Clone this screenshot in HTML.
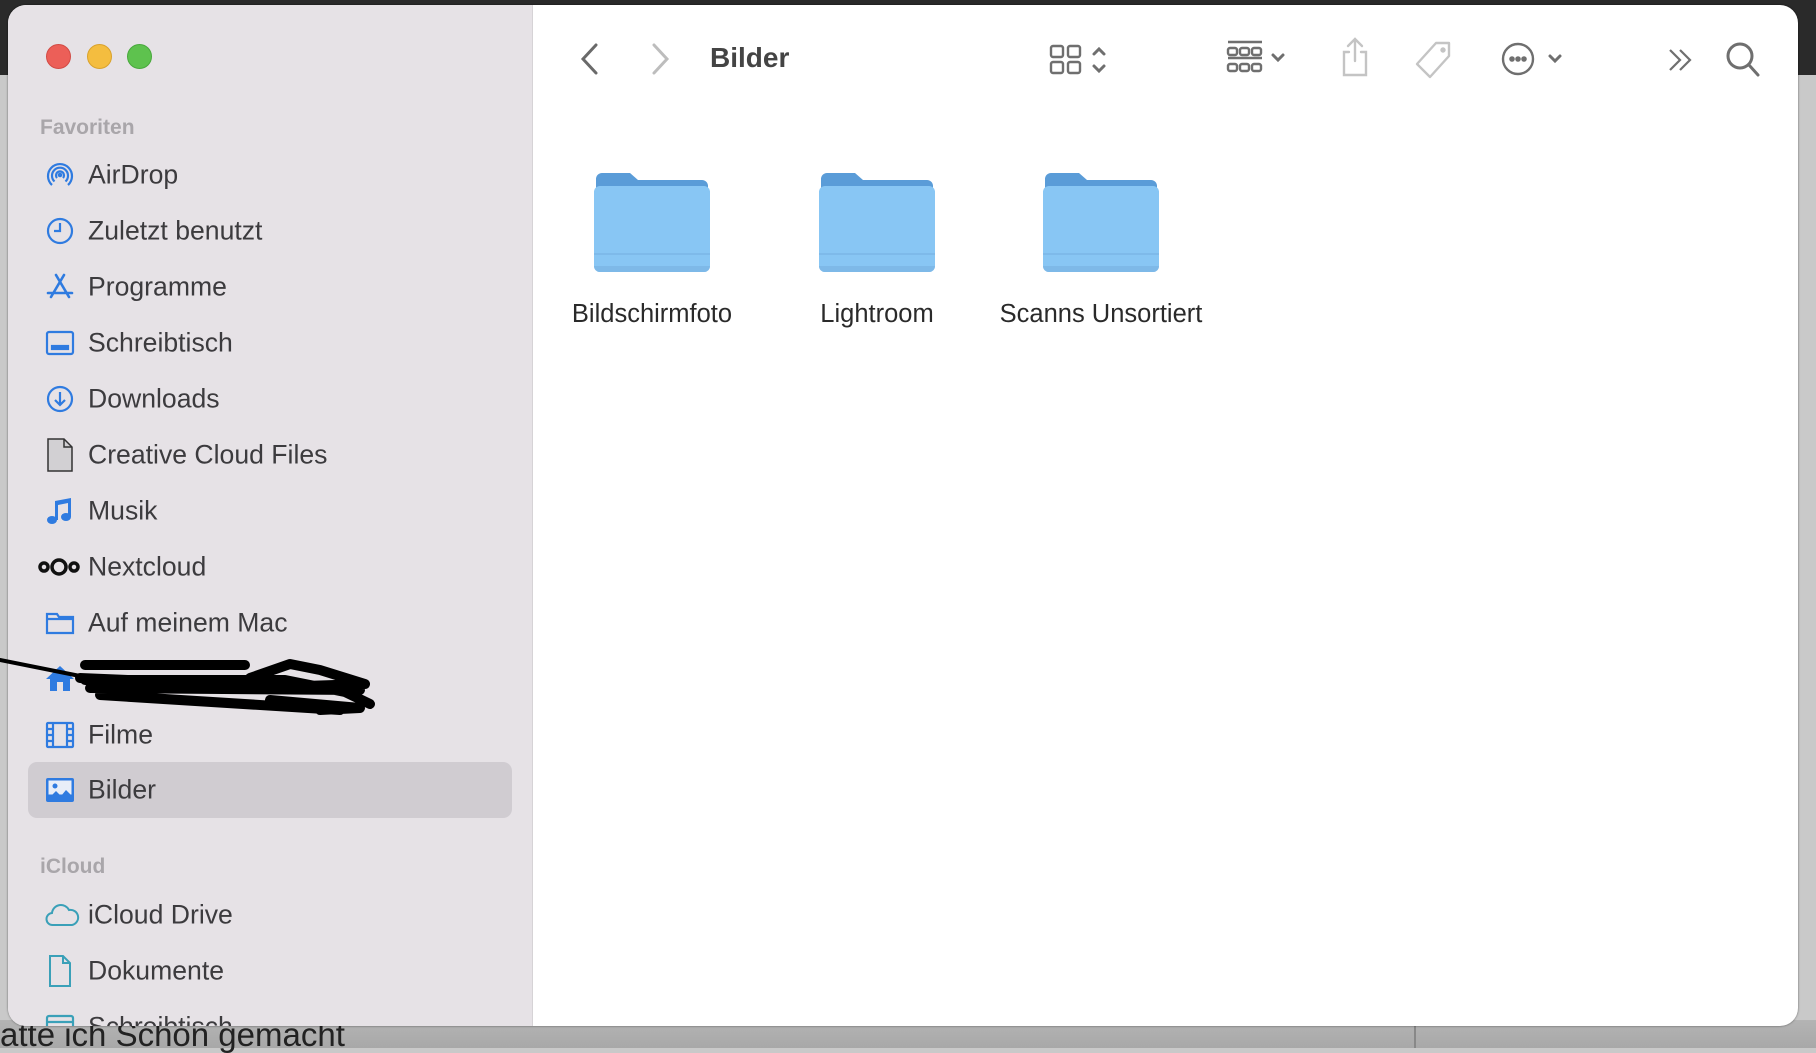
<!DOCTYPE html>
<html><head><meta charset="utf-8"><style>
*{margin:0;padding:0;box-sizing:border-box}
html,body{width:1816px;height:1048px;overflow:hidden;background:#c9c9c9;font-family:"Liberation Sans",sans-serif}
.topbar{position:absolute;left:0;top:0;width:1816px;height:75px;background:#2a2a2a}
.bottom{position:absolute;left:0;top:1020px;width:1816px;height:28px;background:linear-gradient(#b4b4b4,#a8a8a8)}
.bottom span{position:absolute;left:0;top:-2px;font-size:33px;color:#222;line-height:33px}
.vline{position:absolute;left:1414px;top:1026px;width:2px;height:22px;background:#888}
.win{position:absolute;left:8px;top:5px;width:1790px;height:1021px;border-radius:18px;overflow:hidden;background:#fff;box-shadow:0 0 2px rgba(0,0,0,.5)}
.side{position:absolute;left:0;top:0;width:525px;height:100%;background:#e6e2e6;border-right:1px solid #d6d3d6}
.tl{position:absolute;top:39px;width:25px;height:25px;border-radius:50%}
.hdr{position:absolute;left:32px;font-size:21px;font-weight:bold;color:#a9a6aa}
.item{position:absolute;left:0;width:525px;height:56px}
.item .t{position:absolute;left:80px;top:50%;transform:translateY(-50%);font-size:26.6px;color:#3c3b3e;white-space:nowrap}
.item svg{position:absolute;left:36px;top:50%;transform:translateY(-50%)}
.sel{position:absolute;left:20px;top:757px;width:484px;height:56px;background:#d0ccd1;border-radius:9px}
.tb{position:absolute;top:0;left:525px;right:0;height:110px}
.title{position:absolute;left:177px;top:37px;font-size:28px;font-weight:bold;color:#444}
.tb svg{position:absolute}
.folder{position:absolute;top:166px;width:120px;height:105px}
.lbl{position:absolute;top:295px;font-size:25.5px;color:#2a2a2a;text-align:center;width:260px}
</style></head><body>
<div class="topbar"></div>
<div class="bottom"><span>atte ich Schon gemacht</span></div>
<div class="vline"></div>
<div class="win">
 <div class="side">
  <div class="tl" style="left:38px;background:#ec5f58;border:1px solid #d24b45"></div>
  <div class="tl" style="left:79px;background:#f4bd3f;border:1px solid #d9a22c"></div>
  <div class="tl" style="left:119px;background:#5ec24e;border:1px solid #48a83c"></div>
  <div class="hdr" style="top:111px">Favoriten</div>
  <div class="sel"></div>
  <div class="item" style="top:142px"><svg width="32" height="32" viewBox="0 0 32 32" fill="none" stroke="#2f7be0" stroke-width="2.2"><path d="M8 26A12 12 0 1 1 24 26"/><path d="M10.5 22.5A8 8 0 1 1 21.5 22.5"/><path d="M13 19A4 4 0 1 1 19 19"/><circle cx="16" cy="16" r="1.2" fill="#2f7be0"/></svg><span class="t">AirDrop</span></div>
  <div class="item" style="top:198px"><svg width="32" height="32" viewBox="0 0 32 32" fill="none" stroke="#2f7be0" stroke-width="2.2"><circle cx="16" cy="16" r="12"/><path d="M16 8v8h-6"/></svg><span class="t">Zuletzt benutzt</span></div>
  <div class="item" style="top:254px"><svg width="32" height="32" viewBox="0 0 32 32" fill="none" stroke="#2f7be0" stroke-width="2.6" stroke-linecap="round"><path d="M12 4l13 22M20 4L7 26M4 22h24"/></svg><span class="t">Programme</span></div>
  <div class="item" style="top:310px"><svg width="32" height="32" viewBox="0 0 32 32" fill="none" stroke="#2f7be0" stroke-width="2.2"><rect x="3" y="5" width="26" height="22" rx="2"/><rect x="8" y="19" width="16" height="3" fill="#2f7be0"/></svg><span class="t">Schreibtisch</span></div>
  <div class="item" style="top:366px"><svg width="32" height="32" viewBox="0 0 32 32" fill="none" stroke="#2f7be0" stroke-width="2.2"><circle cx="16" cy="16" r="12"/><path d="M16 9v13M11 17l5 5 5-5"/></svg><span class="t">Downloads</span></div>
  <div class="item" style="top:422px"><svg width="32" height="36" viewBox="0 0 32 36" stroke="#333" stroke-width="1.5"><path d="M4 2h16l8 8v24H4z" fill="#d2d0d3"/><path d="M20 2v8h8" fill="none"/></svg><span class="t">Creative Cloud Files</span></div>
  <div class="item" style="top:478px"><svg width="32" height="32" viewBox="0 0 32 32" fill="#2f7be0"><path d="M11 6l16-3v19h-3V8l-10 2v15h-3z"/><ellipse cx="8" cy="25" rx="5" ry="4"/><ellipse cx="22" cy="22" rx="5" ry="4"/></svg><span class="t">Musik</span></div>
  <div class="item" style="top:534px"><svg width="42" height="24" viewBox="0 0 42 24" fill="none" stroke="#111" stroke-width="3.5" style="left:30px"><circle cx="6" cy="12" r="4"/><circle cx="21" cy="12" r="7"/><circle cx="36" cy="12" r="4"/></svg><span class="t">Nextcloud</span></div>
  <div class="item" style="top:590px"><svg width="32" height="32" viewBox="0 0 32 32" fill="none" stroke="#2f7be0" stroke-width="2.2"><path d="M3 7h10l2 3h14v16H3z"/><path d="M3 12h26"/></svg><span class="t">Auf meinem Mac</span></div>
  <div class="item" style="top:646px"><svg width="32" height="32" viewBox="0 0 32 32" fill="#2f7be0"><path d="M16 3L2 16h4v12h20V16h4z"/><rect x="13" y="19" width="6" height="9" fill="#e6e2e6"/></svg></div>
  <div class="item" style="top:702px"><svg width="32" height="32" viewBox="0 0 32 32" fill="none" stroke="#2f7be0" stroke-width="2.2"><rect x="3" y="4" width="26" height="24" rx="1"/><path d="M9 4v24M23 4v24M3 10h6M3 16h6M3 22h6M23 10h6M23 16h6M23 22h6"/></svg><span class="t">Filme</span></div>
  <div class="item" style="top:757px"><svg width="32" height="32" viewBox="0 0 32 32"><rect x="2" y="4" width="28" height="24" rx="2" fill="#2f7be0"/><rect x="4.5" y="6.5" width="23" height="14" fill="#e8eef8"/><circle cx="11" cy="12" r="2.5" fill="#2f7be0"/><path d="M3 26l9-9 5 5 5-6 8 8v2H3z" fill="#2f7be0"/></svg><span class="t">Bilder</span></div>
  <div class="hdr" style="top:850px">iCloud</div>
  <div class="item" style="top:882px"><svg width="36" height="28" viewBox="0 0 36 28" fill="none" stroke="#3aa0b8" stroke-width="2"><path d="M9 24a6 6 0 0 1-1-12 9 9 0 0 1 17-3 7 7 0 0 1 3 15z"/></svg><span class="t">iCloud Drive</span></div>
  <div class="item" style="top:938px"><svg width="32" height="34" viewBox="0 0 32 34" fill="none" stroke="#3aa0b8" stroke-width="2"><path d="M6 2h13l7 7v23H6z"/><path d="M19 2v7h7"/></svg><span class="t">Dokumente</span></div>
  <div class="item" style="top:994px"><svg width="32" height="32" viewBox="0 0 32 32" fill="none" stroke="#3aa0b8" stroke-width="2.2"><rect x="3" y="5" width="26" height="22" rx="2"/><path d="M3 11h26"/></svg><span class="t">Schreibtisch</span></div>
 </div>
 <div class="tb">
  <svg style="left:45px;top:36px" width="24" height="36" viewBox="0 0 24 36" fill="none" stroke="#6a6a6a" stroke-width="3" stroke-linecap="round"><path d="M18 4L5 18l13 14"/></svg>
  <svg style="left:115px;top:36px" width="24" height="36" viewBox="0 0 24 36" fill="none" stroke="#bdbdbd" stroke-width="3" stroke-linecap="round"><path d="M6 4l13 14L6 32"/></svg>
  <div class="title">Bilder</div>
  <svg style="left:516px;top:37px" width="64" height="36" viewBox="0 0 64 36" fill="none" stroke="#6f6f6f" stroke-width="2.4"><rect x="2" y="4" width="12" height="11" rx="2"/><rect x="19" y="4" width="12" height="11" rx="2"/><rect x="2" y="20" width="12" height="11" rx="2"/><rect x="19" y="20" width="12" height="11" rx="2"/><path d="M45 12l5-5 5 5M45 24l5 5 5-5" stroke-width="3" stroke-linecap="round"/></svg>
  <svg style="left:693px;top:33px" width="72" height="40" viewBox="0 0 72 40" fill="none" stroke="#6f6f6f" stroke-width="2.4"><path d="M2 4h34M2 20h34"/><rect x="2" y="10" width="9" height="7" rx="2"/><rect x="14" y="10" width="9" height="7" rx="2"/><rect x="26" y="10" width="9" height="7" rx="2"/><rect x="2" y="26" width="9" height="7" rx="2"/><rect x="14" y="26" width="9" height="7" rx="2"/><rect x="26" y="26" width="9" height="7" rx="2"/><path d="M47 17l5 5 5-5" stroke-width="3" stroke-linecap="round"/></svg>
  <svg style="left:805px;top:31px" width="34" height="42" viewBox="0 0 34 42" fill="none" stroke="#c4c4c4" stroke-width="2.4" stroke-linecap="round"><path d="M17 3v22M10 10l7-7 7 7M11 16H6v23h22V16h-5"/></svg>
  <svg style="left:881px;top:35px" width="40" height="40" viewBox="0 0 40 40" fill="none" stroke="#c4c4c4" stroke-width="2.4"><path d="M22 3h13v13L16 37 3 24z" stroke-linejoin="round"/><circle cx="29" cy="10" r="1.5" fill="#c4c4c4"/></svg>
  <svg style="left:968px;top:37px" width="72" height="36" viewBox="0 0 72 36" fill="none" stroke="#6f6f6f" stroke-width="2.4"><circle cx="17" cy="17" r="15"/><circle cx="11" cy="17" r="1.6" fill="#6f6f6f"/><circle cx="17" cy="17" r="1.6" fill="#6f6f6f"/><circle cx="23" cy="17" r="1.6" fill="#6f6f6f"/><path d="M49 14l5 5 5-5" stroke-width="3" stroke-linecap="round"/></svg>
  <svg style="left:1133px;top:41px" width="30" height="28" viewBox="0 0 30 28" fill="none" stroke="#6f6f6f" stroke-width="2.2"><path d="M4 4l10 10L4 24M14 4l10 10-10 10"/></svg>
  <svg style="left:1191px;top:35px" width="40" height="40" viewBox="0 0 40 40" fill="none" stroke="#6f6f6f" stroke-width="3" stroke-linecap="round"><circle cx="16" cy="16" r="12"/><path d="M25 25l9 10"/></svg>
 </div>
 <svg class="folder" style="left:584px;top:164px" viewBox="0 0 120 105"><path d="M4 10a6 6 0 0 1 6-6h28l8 7h64a6 6 0 0 1 6 6v76H4z" fill="#5a9cd8"/><rect x="2" y="17" width="116" height="86" rx="6" fill="#88c6f4"/><path d="M2 85h116" stroke="#7bb6e6" stroke-width="1.5"/><path d="M2 97a6 6 0 0 0 6 6h104a6 6 0 0 0 6-6" fill="#7eb9e8"/></svg>
 <svg class="folder" style="left:809px;top:164px" viewBox="0 0 120 105"><path d="M4 10a6 6 0 0 1 6-6h28l8 7h64a6 6 0 0 1 6 6v76H4z" fill="#5a9cd8"/><rect x="2" y="17" width="116" height="86" rx="6" fill="#88c6f4"/><path d="M2 85h116" stroke="#7bb6e6" stroke-width="1.5"/><path d="M2 97a6 6 0 0 0 6 6h104a6 6 0 0 0 6-6" fill="#7eb9e8"/></svg>
 <svg class="folder" style="left:1033px;top:164px" viewBox="0 0 120 105"><path d="M4 10a6 6 0 0 1 6-6h28l8 7h64a6 6 0 0 1 6 6v76H4z" fill="#5a9cd8"/><rect x="2" y="17" width="116" height="86" rx="6" fill="#88c6f4"/><path d="M2 85h116" stroke="#7bb6e6" stroke-width="1.5"/><path d="M2 97a6 6 0 0 0 6 6h104a6 6 0 0 0 6-6" fill="#7eb9e8"/></svg>
 <div class="lbl" style="left:514px">Bildschirmfoto</div>
 <div class="lbl" style="left:739px">Lightroom</div>
 <div class="lbl" style="left:963px">Scanns Unsortiert</div>
</div>
<svg style="position:absolute;left:0;top:650px" width="380" height="80" viewBox="0 0 380 80" fill="none" stroke="#000" stroke-linecap="round" stroke-linejoin="round"><path d="M0 10L80 26" stroke-width="4"/><path d="M85 15h160M80 28l280 12M90 38l270 2M85 30h200l60 12 25 12M100 45l240 15M250 28l40-14 30 6 45 14-60 2M270 50l90 8-40 2" stroke-width="10"/></svg>
</body></html>
